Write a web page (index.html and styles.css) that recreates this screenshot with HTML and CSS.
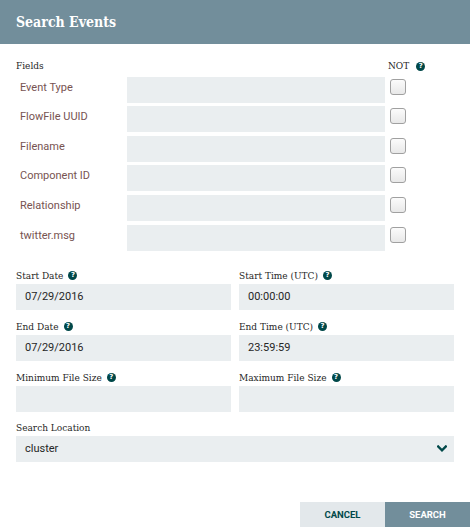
FILE: index.html
```html
<!DOCTYPE html>
<html>
<head>
<meta charset="utf-8">
<link rel="stylesheet" href="styles.css">
</head>
<body>
<div class="dialog">
  <div class="header"><span class="title">Search Events</span></div>
  <div class="content">
    <div class="fields">
      <div class="fields-head">Fields</div>
      <div></div>
      <div class="not-head">NOT <span class="help">?</span></div>

      <div class="prop">Event Type</div><div class="input"></div><div class="cb"></div>
      <div class="prop">FlowFile UUID</div><div class="input"></div><div class="cb"></div>
      <div class="prop">Filename</div><div class="input"></div><div class="cb"></div>
      <div class="prop">Component ID</div><div class="input"></div><div class="cb"></div>
      <div class="prop">Relationship</div><div class="input"></div><div class="cb"></div>
      <div class="prop">twitter.msg</div><div class="input"></div><div class="cb"></div>
    </div>

    <div class="pair">
      <div class="group">
        <div class="label">Start Date <span class="help">?</span></div>
        <div class="input text">07/29/2016</div>
      </div>
      <div class="group">
        <div class="label">Start Time (UTC) <span class="help">?</span></div>
        <div class="input text">00:00:00</div>
      </div>
    </div>
    <div class="pair">
      <div class="group">
        <div class="label">End Date <span class="help">?</span></div>
        <div class="input text">07/29/2016</div>
      </div>
      <div class="group">
        <div class="label">End Time (UTC) <span class="help">?</span></div>
        <div class="input text">23:59:59</div>
      </div>
    </div>
    <div class="pair">
      <div class="group">
        <div class="label">Minimum File Size <span class="help">?</span></div>
        <div class="input text"></div>
      </div>
      <div class="group">
        <div class="label">Maximum File Size <span class="help">?</span></div>
        <div class="input text"></div>
      </div>
    </div>
    <div class="group location">
      <div class="label">Search Location</div>
      <div class="input text select">
        <span>cluster</span>
        <svg class="chev" width="10" height="8" viewBox="0 0 10 8"><polyline points="1.2,1.5 5,5.3 8.8,1.5" fill="none" stroke="#004849" stroke-width="2.4" stroke-linecap="square"/></svg>
      </div>
    </div>
  </div>
  <div class="footer">
    <div class="btn cancel">CANCEL</div>
    <div class="btn search">SEARCH</div>
  </div>
</div>
</body>
</html>
```
FILE: styles.css
```css
html, body {
  margin: 0;
  padding: 0;
  background: #ffffff;
}
.dialog {
  width: 470px;
  height: 527px;
  display: flex;
  flex-direction: column;
  font-family: Roboto, "Liberation Sans", sans-serif;
  overflow: hidden;
}
.header {
  height: 44px;
  background: #728e9b;
  padding-left: 16px;
  display: flex;
  align-items: center;
  flex-shrink: 0;
}
.title {
  font-family: "DejaVu Serif Condensed", "DejaVu Serif", serif;
  font-weight: bold;
  font-size: 14px;
  color: #ffffff;
}
.content {
  padding: 15px 16px 0 16px;
}
.fields {
  display: grid;
  grid-template-columns: 111px 258px 24px;
  grid-template-rows: 14px;
  grid-auto-rows: 26px;
  row-gap: 3.6px;
}
.fields-head, .not-head, .label {
  font-family: "DejaVu Serif Condensed", "DejaVu Serif", serif;
  font-size: 10px;
  color: #262626;
  line-height: 14px;
  white-space: nowrap;
}
.fields-head {
  margin-bottom: 1.4px;
}
.not-head {
  display: flex;
  align-items: center;
  padding-left: 3px;
}
.help {
  display: inline-flex;
  flex-shrink: 0;
  align-items: center;
  justify-content: center;
  width: 9px;
  height: 9px;
  border-radius: 50%;
  background: #004849;
  color: #ffffff;
  font-family: "DejaVu Sans", sans-serif;
  font-weight: bold;
  font-size: 7px;
  line-height: 9px;
  margin-left: 5px;
}
.not-head .help { margin-left: 7px; }
.prop {
  font-size: 11px;
  color: #775351;
  line-height: 20px;
  padding-top: 1px;
  padding-left: 4px;
}
.input {
  background: #eaeef0;
  height: 26px;
  box-sizing: border-box;
}
.cb {
  width: 16px;
  height: 16px;
  margin-top: 2px;
  margin-left: 5px;
  box-sizing: border-box;
  border: 1.5px solid #a0a0a0;
  border-radius: 3px;
  background: linear-gradient(#fbfbfb, #e8e8e8);
}
.pair {
  display: grid;
  grid-template-columns: 215px 215px;
  column-gap: 8px;
  margin-top: 9px;
}
.fields + .pair {
  margin-top: 17px;
}
.group .label {
  height: 16px;
  line-height: 16px;
  display: flex;
  align-items: center;
}
.text {
  font-size: 11px;
  color: #262626;
  padding-left: 9px;
  line-height: 26px;
}
.location {
  margin-top: 8px;
}
.select {
  width: 438px;
  display: flex;
  align-items: center;
  justify-content: space-between;
  padding-right: 7px;
}
.footer {
  margin-top: auto;
  display: flex;
  justify-content: flex-end;
}
.btn {
  width: 85px;
  height: 25px;
  display: flex;
  align-items: center;
  justify-content: center;
  font-size: 9.5px;
  font-weight: bold;
}
.cancel {
  background: #e3e8eb;
  color: #004849;
}
.search {
  background: #728e9b;
  color: #ffffff;
}
```
